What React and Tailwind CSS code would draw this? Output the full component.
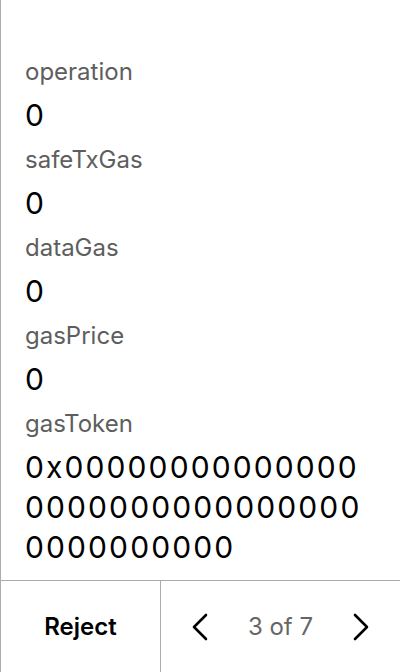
import React from "react";

const fields = [
  { label: "operation", value: "0" },
  { label: "safeTxGas", value: "0" },
  { label: "dataGas", value: "0" },
  { label: "gasPrice", value: "0" },
  { label: "gasToken", value: "0x0000000000000000000000000000000000000000" },
];

const Chevron = ({ dir }) => (
  <svg width="16" height="28" viewBox="0 0 16 28" fill="none">
    <polyline
      points={dir === "left" ? "14,2 2,14 14,26" : "2,2 14,14 2,26"}
      stroke="#000"
      strokeWidth="2.6"
      strokeLinecap="round"
      strokeLinejoin="round"
    />
  </svg>
);

const App = () => {
  return (
    <div
      className="h-[672px] w-[400px] bg-white border-l border-[#ababab] flex flex-col overflow-hidden"
      style={{ fontFamily: "Inter, 'Noto Sans', sans-serif" }}
    >
      {/* Fields */}
      <div className="flex-1 pl-6 pr-[28px] pt-[49px]">
        {fields.map((f) => (
          <div key={f.label}>
            <div className="text-[24px] leading-[46px] text-[#5e5e5e]">
              {f.label}
            </div>
            <div className="text-[30px] tracking-[2.1px] leading-10 pb-[2px] text-black break-all">
              {f.value}
            </div>
          </div>
        ))}
      </div>

      {/* Footer */}
      <div className="h-[92px] border-t border-[#ababab] flex">
        <button className="w-[160px] border-r border-[#ababab] flex items-center justify-center text-[24px] font-semibold text-black">
          Reject
        </button>
        <div className="flex-1 flex items-center justify-between px-[31px]">
          <Chevron dir="left" />
          <span className="text-[24px] text-[#666666]">3 of 7</span>
          <Chevron dir="right" />
        </div>
      </div>
    </div>
  );
};

export default App;
